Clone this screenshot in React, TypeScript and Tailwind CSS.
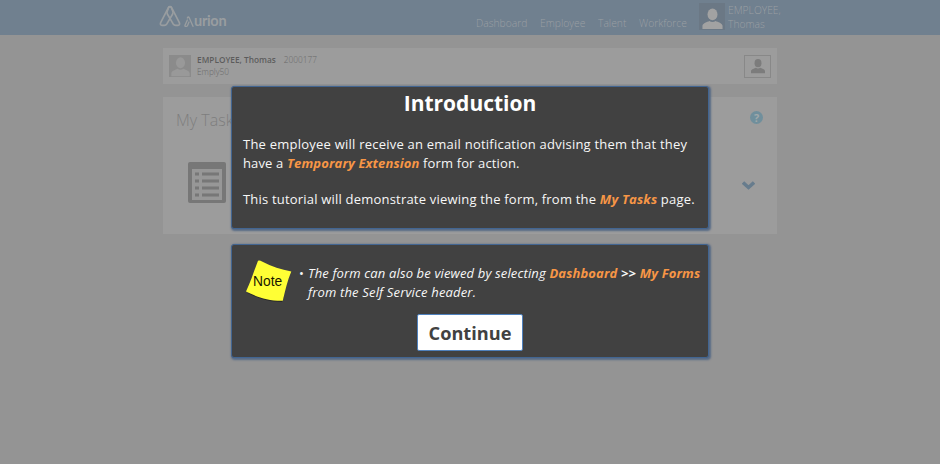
import type { ReactNode } from "react";

function Person({ className }: { className: string }) {
  return (
    <svg viewBox="0 0 24 24" className={className} fill="currentColor">
      <ellipse cx="12" cy="7.7" rx="5.2" ry="6.2" />
      <path d="M1.5 23v-3.2c0-3 5-4.3 7.3-5.3 1.7 1.5 4.7 1.5 6.4 0 2.3 1 7.3 2.3 7.3 5.3V23z" />
    </svg>
  );
}

function Logo() {
  return (
    <div className="flex h-[35px] w-[314px] items-start text-[#999da0]">
      <svg viewBox="0 0 66 66" className="ml-[-3px] mt-[5px] h-[22px] w-[22px]" fill="none" stroke="currentColor" strokeWidth="5" strokeLinejoin="round">
        <path d="M33 5c-3 0-5 2-6 5L5 53c-2 5 0 8 4 8h7c4 0 6-2 8-5l17-29c2-4 1-7 0-9l-3-8c-1-3-2-5-5-5z" />
        <path d="M33 5c3 0 5 2 6 5l22 43c2 5 0 8-4 8h-7c-4 0-6-2-8-5L25 27c-2-4-1-7 0-9l3-8c1-3 2-5 5-5z" />
      </svg>
      <div className="ml-[3px] mt-[11px] flex items-center font-['Lato',sans-serif] text-[14.500px] font-bold leading-[20px]">
        <svg viewBox="0 0 30 33" className="h-[11px] w-[10px]" fill="none" stroke="currentColor" strokeWidth="4" strokeLinejoin="round" strokeLinecap="round">
          <path d="M10 12 3 28q-1 3 2 3h3q2 0 3-3l4-10M10 6q3-6 6 0l11 25" />
        </svg>
        <span className="tracking-[-0.300px]">urion</span>
      </div>
    </div>
  );
}

function Header() {
  return (
    <header className="flex h-[35px] bg-[#70808f] pl-[162px] text-[10.300px] text-[#9a9fa3]">
      <Logo />
      <nav className="flex gap-[13px] pt-[16px] leading-[15px] font-light">
        <span className="w-[51px] whitespace-nowrap">Dashboard</span>
        <span className="w-[45px] whitespace-nowrap">Employee</span>
        <span className="w-[28px] whitespace-nowrap">Talent</span>
        <span className="w-[48px] whitespace-nowrap">Workforce</span>
      </nav>
      <div className="ml-[12px] mt-[3px] flex h-[27px] w-[26px] items-end justify-center bg-[#6b7885] text-[#a2a2a2]">
        <Person className="h-[23px] w-[23px]" />
      </div>
      <div className="ml-[3px] pt-[3px] font-light leading-[14px]">
        <div>EMPLOYEE,</div>
        <div>Thomas</div>
      </div>
    </header>
  );
}

function Page() {
  return (
    <div className="h-[464px] bg-[#949494]">
      <Header />
      <main className="mx-[163px] flex w-[614px] flex-col gap-[13px] pt-[13px]">
        <section className="flex h-[36px] items-center bg-[#9c9c9c] pl-[6px] pr-[6px]">
          <div className="flex h-[22px] w-[22px] items-end justify-center bg-[#8b8b8b] text-[#999999]">
            <Person className="h-[21px] w-[21px]" />
          </div>
          <div className="ml-[6px] flex-1 text-[8.300px] leading-[12px] text-[#6a6a6a]">
            <div className="flex gap-[8px]">
              <b className="font-semibold text-[#5c5c5c]">EMPLOYEE, Thomas</b>
              <span className="font-light">2000177</span>
            </div>
            <div className="font-light">Emply50</div>
          </div>
          <div className="flex h-[23px] w-[27px] items-center justify-center border border-[#888888] text-[#7c7c7c]">
            <Person className="h-[16px] w-[16px]" />
          </div>
        </section>
        <section className="flex h-[137px] justify-between bg-[#9c9c9c] pl-[13px] pr-[13px] pt-[13px]">
          <div>
            <h2 className="text-[16px] font-light leading-[20px] text-[#7e7e7e]">My Tasks</h2>
            <svg viewBox="0 0 38 41" className="ml-[12px] mt-[32px] h-[41px] w-[38px]">
              <path fill="#777777" d="M2 0h34q2 0 2 2v37q0 2-2 2H2q-2 0-2-2V2q0-2 2-2z" />
              <path fill="#979797" d="M4 7h30v31H4z" />
              <path stroke="#777777" strokeWidth="3" d="M7 12h4m3 0h17M7 19h4m3 0h17M7 26h4m3 0h17M7 33h4m3 0h17" />
            </svg>
          </div>
          <div className="flex w-[15px] flex-col items-center">
            <div className="mt-[1px] flex h-[13px] w-[13px] items-center justify-center rounded-full bg-[#708f9c] text-[11px] font-bold leading-[13px] text-[#a0a8aa]">?</div>
            <svg viewBox="0 0 13 10" className="ml-[-17px] mt-[57px] h-[10px] w-[13px] shrink-0" fill="none" stroke="#677c8d" strokeWidth="3.500">
              <path d="m1 1.500 5.500 5L12 1.500" />
            </svg>
          </div>
        </section>
      </main>
    </div>
  );
}

function Panel({ className, children }: { className: string; children: ReactNode }) {
  return (
    <section className={`w-[478px] rounded-[3px] border border-[#426591] bg-[#414141] text-[#f7f7f7] shadow-[1px_1px_2px_1px_#566a86] ${className}`}>
      {children}
    </section>
  );
}

function Key({ children }: { children: ReactNode }) {
  return <b className="font-bold italic text-[#f79646]">{children}</b>;
}

function NoteIcon() {
  return (
    <svg viewBox="0 0 46 43" className="ml-[14px] mt-[15px] h-[43px] w-[46px] shrink-0">
      <path d="M1 33c11 5 20 9 35 9l2-5" fill="#292929" />
      <path d="M12 .7q2-.5 4 .8c10 5 19 8 29.300 10-4 9-6 19-8.500 29.200C22 41 11 37 0 31.500 5 21 8 11 12 .7z" fill="#ffff35" />
      <text x="7" y="25.700" fontFamily="Liberation Sans, sans-serif" fontSize="13.800" fill="#171700">Note</text>
    </svg>
  );
}

export default function App() {
  return (
    <div className="relative h-[464px] w-[940px] overflow-hidden font-['Open_Sans','Noto_Sans',sans-serif]">
      <Page />
      <div className="absolute inset-0 flex flex-col gap-[15px] pl-[231px] pt-[86px]">
        <Panel className="h-[143px]">
          <h1 className="pt-[2px] text-center text-[21px] font-bold leading-[28px] text-white">Introduction</h1>
          <div className="whitespace-nowrap pl-[11px] pt-[18px] text-[13px] leading-[19px]">
            <p className="tracking-[0.230px]">The employee will receive an email notification advising them that they</p>
            <p className="tracking-[0.140px]">have a <Key>Temporary Extension</Key> form for action.</p>
            <p className="pt-[17px] tracking-[0.200px]">This tutorial will demonstrate viewing the form, from the <Key>My Tasks</Key> page.</p>
          </div>
        </Panel>
        <Panel className="h-[114px]">
          <div className="flex h-[69px]">
            <NoteIcon />
            <span className="ml-[7px] w-[8px] pt-[19px] text-[13px] leading-[19px]">•</span>
            <div className="whitespace-nowrap pl-[1px] pt-[19px] text-[13px] italic leading-[19px]">
              <p className="tracking-[0.140px]">The form can also be viewed by selecting <Key>Dashboard</Key> <b>&gt;&gt;</b> <Key>My Forms</Key></p>
              <p className="tracking-[0.160px]">from the Self Service header.</p>
            </div>
          </div>
          <button className="ml-[185px] flex h-[37px] w-[106px] items-center justify-center rounded-[2px] border border-[#4f81bd] bg-white pt-[2px] text-[18.200px] font-bold text-[#414141]">Continue</button>
        </Panel>
      </div>
    </div>
  );
}
